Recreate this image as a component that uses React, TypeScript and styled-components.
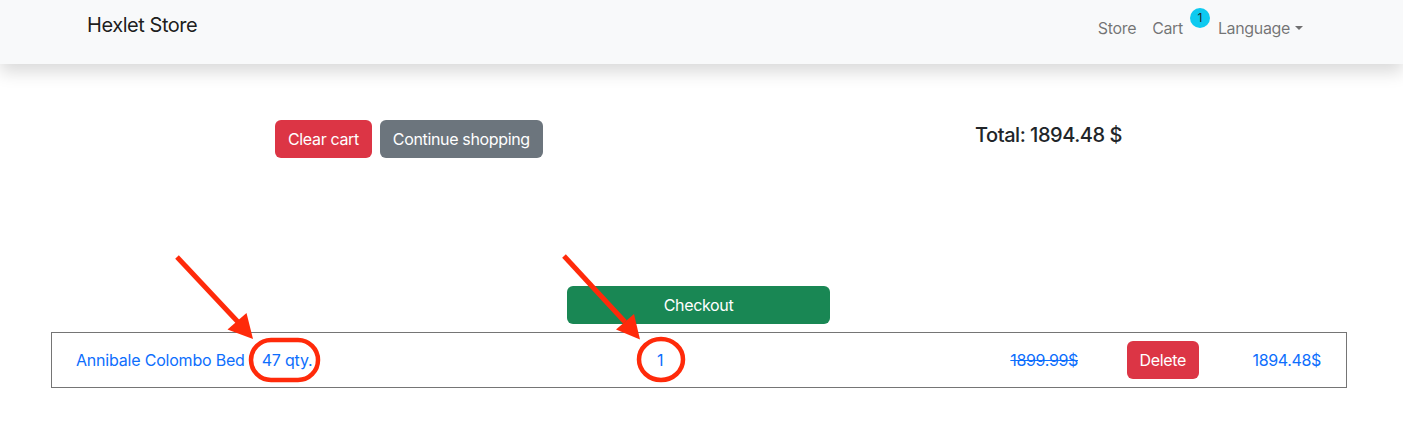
import React from "react";
import styled, { createGlobalStyle } from "styled-components";

const Global = createGlobalStyle`
  html, body { margin: 0; padding: 0; background: #fff; }
  body {
    font-family: Inter, "Noto Sans", "Liberation Sans", sans-serif;
    font-size: 16px;
    line-height: 1.5;
    color: #212529;
    letter-spacing: -0.35px;
  }
  * { box-sizing: border-box; }
`;

const Page = styled.div`
  position: relative;
  width: 1403px;
  min-height: 446px;
`;

const Navbar = styled.nav`
  height: 64px;
  background: #f8f9fa;
  box-shadow: 0 8px 16px rgba(0, 0, 0, 0.15);
  display: flex;
  justify-content: space-between;
  align-items: flex-start;
  padding: 0 92px 0 87px;
`;

const Brand = styled.a`
  font-size: 20px;
  line-height: 30px;
  padding-top: 10px;
  color: rgba(0, 0, 0, 0.9);
  text-decoration: none;
  letter-spacing: -0.45px;
`;

const NavList = styled.div`
  display: flex;
  padding-top: 8px;
`;

const NavLink = styled.a`
  display: flex;
  align-items: flex-start;
  padding: 8px;
  line-height: 24px;
  color: rgba(0, 0, 0, 0.55);
  text-decoration: none;
`;

const Badge = styled.span`
  width: 20px;
  height: 20px;
  border-radius: 50%;
  background: #0dcaf0;
  color: #212529;
  font-size: 12px;
  line-height: 20px;
  letter-spacing: 0;
  text-align: center;
  margin: -8px -8px 0 7px;
`;

const Caret = styled.span`
  display: inline-block;
  margin: 10px 0 0 5px;
  border-top: 4.8px solid currentColor;
  border-left: 4.2px solid transparent;
  border-right: 4.2px solid transparent;
`;

const Main = styled.main`
  padding: 0 0 0 51px;
`;

const TopRow = styled.div`
  display: grid;
  grid-template-columns: 700px 1fr;
  align-items: center;
  margin-top: 56px;
  padding-left: 224px;
`;

const ButtonGroup = styled.div`
  display: flex;
  gap: 8px;
`;

const Button = styled.button<{ $variant: "danger" | "secondary" | "success" }>`
  font-family: inherit;
  font-size: 16px;
  letter-spacing: inherit;
  line-height: 24px;
  padding: 6px 12px;
  border-radius: 6px;
  border: 1px solid transparent;
  color: #fff;
  cursor: pointer;
  background: ${(p) =>
    p.$variant === "danger" ? "#dc3545" : p.$variant === "secondary" ? "#6c757d" : "#198754"};
`;

const Total = styled.h5`
  margin: 0 0 8px 0;
  font-size: 20px;
  font-weight: 500;
  line-height: 24px;
  letter-spacing: -0.45px;
`;

const CheckoutButton = styled(Button)`
  display: block;
  width: 263px;
  margin: 128px 0 8px 516px;
`;

const CartRow = styled.div`
  width: 1296px;
  border: 1px solid #757575;
  display: grid;
  grid-template-columns: 524px 120px 358px 121px 1fr;
  align-items: center;
  padding: 8px 25px 8px 24px;
`;

const NameCell = styled.div`
  display: flex;
  gap: 17px;
  letter-spacing: -0.2px;
`;

const LinkText = styled.a<{ $strike?: boolean; $center?: boolean; $end?: boolean }>`
  color: #0d6efd;
  text-decoration: ${(p) => (p.$strike ? "line-through" : "none")};
  text-align: ${(p) => (p.$center ? "center" : p.$end ? "right" : "left")};
`;

const EndCell = styled.div`
  display: flex;
  justify-content: flex-end;
`;

const Annotations = styled.svg`
  position: absolute;
  left: 0;
  top: 0;
  pointer-events: none;
`;

const RED = "#ff2a0a";

export default function App() {
  return (
    <Page>
      <Global />
      <Navbar>
        <Brand href="#">Hexlet Store</Brand>
        <NavList>
          <NavLink href="#">Store</NavLink>
          <NavLink href="#">
            Cart<Badge>1</Badge>
          </NavLink>
          <NavLink href="#">
            Language<Caret />
          </NavLink>
        </NavList>
      </Navbar>
      <Main>
        <TopRow>
          <ButtonGroup>
            <Button $variant="danger">Clear cart</Button>
            <Button $variant="secondary">Continue shopping</Button>
          </ButtonGroup>
          <Total>Total: 1894.48 $</Total>
        </TopRow>
        <CheckoutButton $variant="success">Checkout</CheckoutButton>
        <CartRow>
          <NameCell>
            <LinkText href="#">Annibale Colombo Bed</LinkText>
            <LinkText href="#">47 qty.</LinkText>
          </NameCell>
          <LinkText $center href="#">1</LinkText>
          <LinkText $strike $end href="#">1899.99$</LinkText>
          <EndCell>
            <Button $variant="danger">Delete</Button>
          </EndCell>
          <LinkText $end href="#">1894.48$</LinkText>
        </CartRow>
      </Main>
      <Annotations width="1403" height="446" viewBox="0 0 1403 446">
        <line x1="177" y1="257" x2="238" y2="322" stroke={RED} strokeWidth="5" />
        <polygon points="253,339 227.5,329.5 246.5,313" fill={RED} />
        <rect x="251" y="340" width="67" height="40" rx="20" fill="none" stroke={RED} strokeWidth="4.5" />
        <line x1="564" y1="256" x2="625" y2="322" stroke={RED} strokeWidth="5" />
        <polygon points="640,339.5 616,329.5 634,314" fill={RED} />
        <ellipse cx="661" cy="359.5" rx="22" ry="20.5" fill="none" stroke={RED} strokeWidth="4.5" />
      </Annotations>
    </Page>
  );
}
